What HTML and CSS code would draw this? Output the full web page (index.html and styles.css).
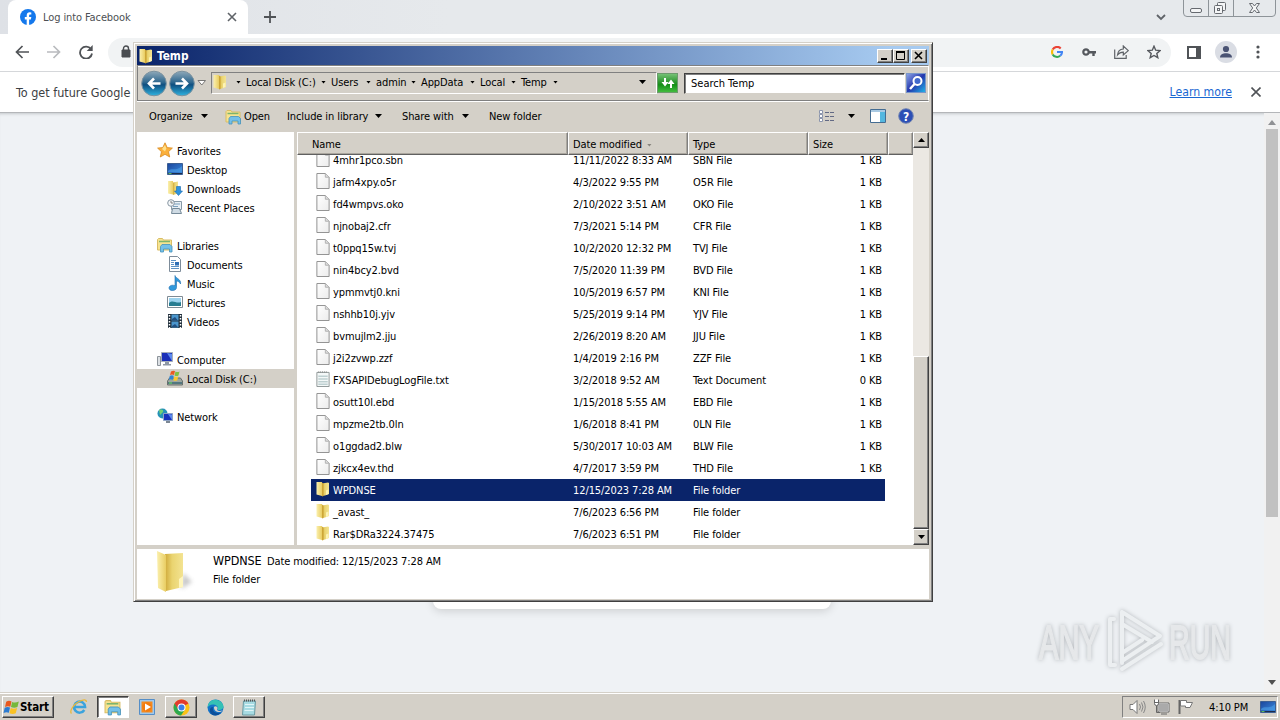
FILE: index.html
```
<!DOCTYPE html>
<html lang="en">
<head>
    <meta charset="UTF-8">
    <meta name="viewport" content="width=device-width, initial-scale=1.0">
    <title>Log into Facebook</title>
    <link rel="stylesheet" href="styles.css">
</head>
<body>
    <!-- shared icons -->
    <svg class="defs" width="0" height="0">
        <defs>
            <linearGradient id="gold" x1="0" x2="1"><stop offset="0" stop-color="#fbf0ae"/><stop offset="1" stop-color="#e9cd62"/></linearGradient>
            <linearGradient id="goldDark" x1="0" x2="1"><stop offset="0" stop-color="#cfa93a"/><stop offset=".4" stop-color="#ead470"/><stop offset="1" stop-color="#f3e392"/></linearGradient>
            <linearGradient id="blue" x1="0" y1="0" x2="1" y2="1"><stop offset="0" stop-color="#1b459c"/><stop offset="1" stop-color="#3c8ee0"/></linearGradient>
            <linearGradient id="orb" x1="0" y1="0" x2="0" y2="1"><stop offset="0" stop-color="#8fa9b9"/><stop offset=".45" stop-color="#2f688f"/><stop offset=".55" stop-color="#0f4f80"/><stop offset="1" stop-color="#2fb3e0"/></linearGradient>
            <linearGradient id="paper" x1="0" y1="0" x2="1" y2="1"><stop offset="0" stop-color="#fff"/><stop offset="1" stop-color="#ececec"/></linearGradient>
        </defs>
        <symbol id="i-folder" viewBox="0 0 16 16">
            <path d="M1.500 1H7v14l-5.500-1.500z" fill="url(#gold)"/>
            <path d="M7 2.500L13 1.500l1 .6V13l-4 1.500L7 15z" fill="url(#goldDark)"/>
            <path d="M7 1.500l1.500 1.200V15L7 15.400z" fill="#cda637"/>
            <path d="M11 9.500l2.500-1V13L11 14z" fill="#fdf3b5"/>
        </symbol>
        <symbol id="i-file" viewBox="0 0 14 17">
            <path d="M.5.500h9l4 4v12H.5z" fill="url(#paper)" stroke="#8c8c8c"/>
            <path d="M9.500.500v4h4" fill="#ddd" stroke="#b0b0b0"/>
        </symbol>
        <symbol id="i-text" viewBox="0 0 14 17">
            <path d="M.5 1.500h13v15H.5z" fill="#f4f8f8" stroke="#8c9494"/>
            <path d="M2 5.500h10M2 8.500h10M2 11.500h10M2 14h10" stroke="#9fb9ba"/>
            <path d="M2 1h10" stroke="#777" stroke-dasharray="1 1"/>
        </symbol>
        <symbol id="i-library" viewBox="0 0 16 16">
            <path d="M.5 2.500l1-1h4l1 1.500h8v10H.5z" fill="#f6e391" stroke="#d9bd66"/>
            <path d="M2 4.500h11" stroke="#7db46c" stroke-width="1.500"/>
            <path d="M3.500 15V9.500l1.500-2h8l2 2V15h-2.500v-3h-6v3z" fill="#74c0e8" stroke="#4492bd" stroke-width=".8"/>
        </symbol>
        <symbol id="i-star" viewBox="0 0 16 16">
            <path d="M8 .8l2.200 4.800 5.200.5-3.900 3.600 1.200 5.300L8 12.300 3.300 15l1.200-5.300L.6 6.100l5.200-.5z" fill="#fbb03b" stroke="#d98a1f" stroke-width=".8"/>
            <path d="M8 3l1.400 3.500-1.400 3-3-2.400z" fill="#ffe08a"/>
        </symbol>
        <symbol id="i-desktop" viewBox="0 0 16 16">
            <path d="M.5 2.500h15v11H.5z" fill="url(#blue)" stroke="#3d5f92"/>
            <path d="M1 10c4-4 8 1 14-5v6H1z" fill="#4da0e8" opacity=".6"/>
            <path d="M1 12.500h14" stroke="#1d2b4a"/>
            <path d="M1.500 12.500h3" stroke="#5cba5c"/>
        </symbol>
        <symbol id="i-download" viewBox="0 0 16 16">
            <path d="M1 1h5v13.500l-5-1z" fill="url(#gold)"/>
            <path d="M6 2.500l5-1v12L6 15z" fill="url(#goldDark)"/>
            <path d="M9.500 6.500h4V11h2l-4 4.500-4-4.500h2z" fill="#2f93de" stroke="#1a68ad" stroke-width=".6"/>
        </symbol>
        <symbol id="i-recent" viewBox="0 0 16 16">
            <path d="M4.500 2.500h10v8h-10z" fill="#e8eff4" stroke="#8799a6"/>
            <path d="M6 5h7M6 7.500h5" stroke="#7aa0bd"/>
            <path d="M5.500 9.500h7l2 5h-10z" fill="#cfdbe4" stroke="#768a99"/>
            <circle cx="4" cy="4" r="3.300" fill="#f4f7f9" stroke="#8997a3"/>
            <path d="M4 2v2h2" stroke="#666" fill="none" stroke-width=".8"/>
        </symbol>
        <symbol id="i-document" viewBox="0 0 16 16">
            <path d="M2.500.500h8l3 3v12h-11z" fill="#fff" stroke="#7d8c9a"/>
            <path d="M4 4.500h5M4 6.500h3M4 8.500h3M4 10.500h8M4 12.500h8" stroke="#5d93c5"/>
            <path d="M8 6h4v3.500H8z" fill="#2f6fb5"/>
        </symbol>
        <symbol id="i-music" viewBox="0 0 16 16">
            <path d="M8 .5c.5 3 6.500 3.500 5.500 8.500-.8-2-2.500-2.800-4-3v6.500c0 4-7.500 4-7.500.5 0-2.500 3.500-3.500 6-2.300z" fill="#3099dc" stroke="#1c6cad" stroke-width=".6"/>
        </symbol>
        <symbol id="i-picture" viewBox="0 0 16 16">
            <path d="M.5 2.500h15v11H.5z" fill="#fff" stroke="#7f8b94"/>
            <path d="M2 4h12v8H2z" fill="#9dd3ee"/>
            <path d="M2 9c4-4 7 1 12-1v4H2z" fill="#287d91"/>
        </symbol>
        <symbol id="i-video" viewBox="0 0 16 16">
            <path d="M1 1h14v14H1z" fill="#22303d"/>
            <path d="M4.500 1.500h7v6h-7zM4.500 8.500h7v6h-7z" fill="#4b96cd"/>
            <path d="M5 6l3-2 3 3.500H5zM5 13l3-2 3 3H5z" fill="#214f80"/>
            <path d="M2.500 2v13M13.500 2v13" stroke="#fff" stroke-width="1.500" stroke-dasharray="1.500 1.500"/>
        </symbol>
        <symbol id="i-computer" viewBox="0 0 16 16">
            <path d="M.5 5.500h3v9h-3z" fill="#dce0e4" stroke="#8d949b"/>
            <path d="M4.500 1.500h11v9h-11z" fill="#1b2fb8" stroke="#a5adb8"/>
            <path d="M10 2l5 1v7z" fill="#5e8bee"/>
            <path d="M8 11h4v2h2v1.500H6V13h2z" fill="#8e98a4"/>
        </symbol>
        <symbol id="i-disk" viewBox="0 0 16 16">
            <path d="M.5 11l2-3h11l2 3v4H.5z" fill="#9da7a0" stroke="#68716d"/>
            <path d="M1 12h14v2H1z" fill="#53777f"/>
            <path d="M2 13h3" stroke="#6bea61"/>
            <path d="M4 1.500q2-1.200 4-.5L7 5Q5 4 3 5z" fill="#ea5b24"/>
            <path d="M8.500 1.500q2 1 4 0l-1 4q-2 1-4 0z" fill="#7fc242"/>
            <path d="M2.800 5.800q2-1 4 0l-1 4q-2-1-4 0z" fill="#3185d2"/>
            <path d="M7.300 6.300q2 1 4 0l-1 4q-2 1-4 0z" fill="#fac92e"/>
        </symbol>
        <symbol id="i-network" viewBox="0 0 16 16">
            <circle cx="5.500" cy="5.500" r="5" fill="#2592b8"/>
            <path d="M2 2c3-1 5 0 4 2L3 7zM6 7l3-2v4z" fill="#72cf75"/>
            <path d="M6.500 5.500h9v7h-9z" fill="#1830bd" stroke="#8da2c4"/>
            <path d="M11 6l4 .5V12z" fill="#5e8bee"/>
            <path d="M9 13h4v2H9z" fill="#7d8894"/>
        </symbol>
        <symbol id="i-flag" viewBox="0 0 16 16">
            <path d="M3 2.500c2-1.200 3.500-1 5-.2L6.900 7.400c-1.500-.8-3-.8-5 .2z" fill="#e9591f"/>
            <path d="M8.600 2.800c2 .9 3.900.7 6.300-.4l-1.300 5.100c-2 1-4 1-6.100.1z" fill="#76b83b"/>
            <path d="M1.600 8.300c2-1.100 3.500-1 5-.2L5.500 13c-1.500-.9-3.200-.8-5 .2z" fill="#2c7bd1"/>
            <path d="M7.300 8.500c2 1 3.800.8 6-.1L12 13.400c-2 1-4 .9-5.900 0z" fill="#fac223"/>
        </symbol>
    </svg>

    <div class="desktop">
        <div class="browser">
            <div class="tabstrip">
                <div class="tab">
                    <svg width="16" height="16" viewBox="0 0 16 16"><circle cx="8" cy="8" r="8" fill="#1478ec"/><path d="M6.700 16v-5.600H4.800V8h1.900V6.500c0-2.100 1.200-3.200 3-3.200l1.600.1v2h-1c-1 0-1.200.5-1.200 1.200V8h2.200l-.4 2.400H9.100V16z" fill="#fff"/></svg>
                    <span class="tab-title">Log into Facebook</span>
                    <svg width="10" height="10" viewBox="0 0 10 10"><path d="M1 1l8 8M9 1L1 9" stroke="#5f6368" stroke-width="1.600"/></svg>
                </div>
                <svg class="new-tab" width="12" height="12" viewBox="0 0 12 12"><path d="M6 0v12M0 6h12" stroke="#505357" stroke-width="1.800"/></svg>
                <svg class="tab-search" width="10" height="7" viewBox="0 0 10 7"><path d="M1 1l4 4 4-4" fill="none" stroke="#5f6368" stroke-width="1.800"/></svg>
                <svg class="caption" width="94" height="17" viewBox="0 0 94 17">
                    <path d="M.5 0v13q0 3.500 3.500 3.500h85q3.500 0 3.500-3.500V0M25.500 0v16M50.500 0v16" fill="none" stroke="#8e9499"/>
                    <g fill="#f4f5f6" stroke="#666a70"><rect x="7.500" y="8.500" width="11" height="4" rx="1.500"/><rect x="34.500" y="2.500" width="8" height="8" rx="1"/><rect x="31.500" y="5.500" width="8" height="8" rx="1"/><rect x="34.500" y="8.500" width="2" height="2"/>
                    <path d="M66.500 3.500h3l2 2.500 2-2.500h3l-3.200 4.500 3.200 4.500h-3l-2-2.500-2 2.500h-3l3.200-4.500z"/></g>
                </svg>
            </div>
            <div class="toolbar">
                <svg width="14" height="14" viewBox="0 0 14 14"><path d="M14 7H1.500M7.500 1l-6 6 6 6" fill="none" stroke="#505357" stroke-width="1.700"/></svg>
                <svg width="14" height="14" viewBox="0 0 14 14"><path d="M0 7h12.500M6.500 1l6 6-6 6" fill="none" stroke="#b9bbbe" stroke-width="1.700"/></svg>
                <svg width="14" height="14" viewBox="0 0 14 14"><path d="M12 4.200A6 6 0 1 0 13 8.500" fill="none" stroke="#505357" stroke-width="1.800"/><path d="M13.700 0v6H7.700z" fill="#505357"/></svg>
                <div class="omnibox">
                    <svg width="10" height="13" viewBox="0 0 10 13"><path d="M1 5h8v7H1z" fill="#4a4d51" stroke="#4a4d51" stroke-linejoin="round"/><path d="M2.500 5V3.500a2.500 2.500 0 0 1 5 0V5" fill="none" stroke="#4a4d51" stroke-width="1.400"/></svg>
                    <div class="omnibox-actions">
                        <svg width="12" height="12" viewBox="0 0 12 12" fill="none" stroke-width="2.100"><path d="M9.700 2.400A5 5 0 0 0 1.700 3.600" stroke="#ea4335"/><path d="M1.700 3.600a5 5 0 0 0 0 4.800" stroke="#fbbc05"/><path d="M1.700 8.400a5 5 0 0 0 7.500 1.400" stroke="#34a853"/><path d="M9.200 9.800A5 5 0 0 0 11 6H6" stroke="#4285f4"/></svg>
                        <svg class="key" width="14" height="8" viewBox="0 0 14 8"><circle cx="4" cy="4" r="2.700" fill="none" stroke="#55585d" stroke-width="2.200"/><path d="M7 3h7v2.400h-1.300V8h-2.400V5.400H7z" fill="#55585d"/></svg>
                        <svg width="15" height="14" viewBox="0 0 15 14" fill="none" stroke="#5f6368" stroke-width="1.200"><path d="M.7 4.500v8.800h11.500V10"/><path d="M3.500 10c.4-4 2.500-5.800 5.800-6V1l5 4.600-5 4.400V7.200C6.800 7.200 5 8 3.500 10z"/></svg>
                        <svg width="14" height="14" viewBox="0 0 14 14"><path d="M7 1.200l1.700 4 4.300.4-3.200 2.900 1 4.200L7 10.500l-3.800 2.200 1-4.200L1 5.600l4.300-.4z" fill="none" stroke="#55585d" stroke-width="1.400"/></svg>
                    </div>
                </div>
                <svg class="side-panel" width="14" height="13" viewBox="0 0 14 13"><path d="M1 1h12v11H1z" fill="none" stroke="#505357" stroke-width="2"/><path d="M9 0h5v13H9z" fill="#505357"/></svg>
                <svg class="avatar" width="22" height="22" viewBox="0 0 22 22"><circle cx="11" cy="11" r="11" fill="#dadde4"/><circle cx="11" cy="8" r="3.100" fill="#4a5373"/><path d="M5 16.500c0-3 3-4.200 6-4.200s6 1.200 6 4.200z" fill="#4a5373"/></svg>
                <svg class="kebab" width="4" height="14" viewBox="0 0 4 14" fill="#505357"><circle cx="2" cy="2" r="1.600"/><circle cx="2" cy="7" r="1.600"/><circle cx="2" cy="12" r="1.600"/></svg>
            </div>
            <div class="infobar">
                <span class="infobar-text">To get future Google</span>
                <a class="infobar-link">Learn more</a>
                <svg width="10" height="10" viewBox="0 0 10 10"><path d="M.5.500l9 9M9.500.500l-9 9" stroke="#505357" stroke-width="1.600"/></svg>
            </div>
            <div class="page">
                <div class="page-content"><div class="login-card"></div></div>
                <div class="page-scroll">
                    <svg width="8" height="5" viewBox="0 0 8 5"><path d="M0 5l4-5 4 5z" fill="#8f9194"/></svg>
                    <div class="page-thumb"></div>
                    <svg width="8" height="5" viewBox="0 0 8 5"><path d="M0 0h8L4 5z" fill="#505050"/></svg>
                </div>
            </div>
        </div>

        <div class="taskbar">
            <div class="start"><svg width="17" height="17"><use href="#i-flag"/></svg>Start</div>
            <div class="task"><svg width="18" height="18" viewBox="0 0 18 18"><path d="M14.300 12a5.500 5.500 0 1 1 .8-3H5" fill="none" stroke="#3ba3dd" stroke-width="2.500"/><path d="M1.500 15.500C-1 13 4 6 9 3.500s7.500-2 7.500.5" fill="none" stroke="#e9b83c" stroke-width="1.300"/></svg></div>
            <div class="task active"><svg width="18" height="17"><use href="#i-library"/></svg></div>
            <div class="task"><svg width="16" height="16" viewBox="0 0 16 16"><path d="M.5.500h15v15H.5z" fill="#9fc9ed" stroke="#558ec7"/><path d="M2.500 2.500h11v11h-11z" fill="#f58a1f"/><circle cx="8" cy="8" r="4.700" fill="#f27c10"/><path d="M6 4.500l6 3.500-6 3.500z" fill="#fff"/></svg></div>
            <div class="task raised"><svg width="17" height="17" viewBox="0 0 17 17"><circle cx="8.500" cy="8.500" r="8" fill="#fbc116"/><path d="M8.500 8.500L1.600 4.500a8 8 0 0 1 13.800 0z" fill="#e33b2e"/><path d="M8.500 8.500L1.600 4.500A8 8 0 0 0 8 16.500l4-6z" fill="#2da94f"/><path d="M1.600 4.500L5 10l3.500-5h7L8 3z" fill="#e33b2e"/><circle cx="8.500" cy="8.500" r="4" fill="#fff"/><circle cx="8.500" cy="8.500" r="3" fill="#3c7fe8"/></svg></div>
            <div class="task"><svg width="17" height="17" viewBox="0 0 17 17"><circle cx="8.500" cy="8.500" r="8" fill="#1473c8"/><path d="M1 6C3-1 14-1 16.500 7c.5 3.500-4 5-6 3.500 1.500-3-1.500-5-4.500-5C3 5.500 1.300 7 .5 9z" fill="#35c1b5"/><path d="M6 8c-1 4 2 7 8 5.500-3 4-10 4-11-1-.5-3 1-4.500 3-4.500z" fill="#0c4f9a"/><path d="M7 8c1-1.500 3.500-.5 3.500 1 0 1-.5 1.300-.3 2 1 1.500 4 1.300 5.800.3-3 3.500-9.500 1.500-9-3.300z" fill="#d4d0c8"/></svg></div>
            <div class="task raised"><svg width="16" height="17" viewBox="0 0 16 17"><path d="M2.500 2h12l-1 14H1.500z" fill="#a7dbe2" stroke="#6b9aa3"/><path d="M4 5.500h9M4 8.500h9M3.500 11.500h9" stroke="#e1f5f7"/><path d="M3 1.500h11" stroke="#555" stroke-width="2" stroke-dasharray="1 1"/></svg></div>
            <div class="tray">
                <svg width="17" height="16" viewBox="0 0 17 16"><path d="M1 5.500h3L8 1.500v13L4 10.500H1z" fill="#fff" stroke="#777"/><path d="M10.500 5q2 3 0 6M12.500 3.500q3 4.500 0 9M14.500 2q3.500 6 0 12" fill="none" stroke="#888"/></svg>
                <svg width="17" height="16" viewBox="0 0 17 16"><path d="M5.500 4.500h10v8h-10z" fill="#aaa" stroke="#fff"/><path d="M5 4h11v9H5zM8 15h6M3.500 7v6.500H7" fill="none" stroke="#666"/><path d="M1.500.500v4q0 2 2 2t2-2v-4M1.500 3.500h4" fill="#fff" stroke="#666"/></svg>
                <svg width="17" height="16" viewBox="0 0 17 16"><path d="M2.500 1v14" stroke="#666" stroke-width="2"/><path d="M3.500 1.500h6v2h6L13 8.500H8.500V7h-5z" fill="#fff" stroke="#777"/></svg>
                <span class="clock">4:10 PM</span>
                <svg width="16" height="16"><use href="#i-desktop"/></svg>
            </div>
        </div>

        <svg class="watermark" width="220" height="74" viewBox="0 0 220 74">
            <g class="mark-text">
                <text x="5" y="54" textLength="60" lengthAdjust="spacingAndGlyphs">ANY</text>
                <text x="135" y="54" textLength="62" lengthAdjust="spacingAndGlyphs">RUN</text>
            </g>
            <g class="mark-shape">
                <path d="M88 7v51M88 7l38 24-38 25M80 14h-4v46h5M88 19l30 18M88 48l20-13M88 64l39-25"/>
            </g>
        </svg>

        <div class="window">
            <div class="titlebar">
                <svg width="16" height="16"><use href="#i-folder"/></svg>
                <span class="title">Temp</span>
                <div class="win-btn"><svg width="12" height="10" viewBox="0 0 12 10"><path d="M2 8h6" stroke="#000" stroke-width="2"/></svg></div>
                <div class="win-btn"><svg width="12" height="10" viewBox="0 0 12 10"><path d="M1.500 1v7.500h8V1" fill="none" stroke="#000"/><path d="M1 1h9" stroke="#000" stroke-width="2"/></svg></div>
                <div class="win-btn close"><svg width="12" height="10" viewBox="0 0 12 10"><path d="M2 1l7 7M9 1L2 8" stroke="#000" stroke-width="1.600"/></svg></div>
            </div>

            <div class="navbar">
                <svg width="26" height="27" viewBox="0 0 26 27"><circle cx="13" cy="13.500" r="12.300" fill="url(#orb)" stroke="#7b929f"/><path d="M19.500 13.500H8M13 8.500l-5 5 5 5" fill="none" stroke="#fff" stroke-width="2.600"/></svg>
                <svg class="forward" width="26" height="27" viewBox="0 0 26 27"><circle cx="13" cy="13.500" r="12.300" fill="url(#orb)" stroke="#7b929f"/><path d="M6.500 13.500H18M13 8.500l5 5-5 5" fill="none" stroke="#fff" stroke-width="2.600"/></svg>
                <svg class="history" width="10" height="6" viewBox="0 0 10 6"><path d="M1 .5h7.500L4.800 5z" fill="#fff" stroke="#777"/></svg>
                <div class="address">
                    <svg width="16" height="16"><use href="#i-folder"/></svg>
                    <i class="arrow first"></i><span class="crumb-disk">Local Disk (C:)</span>
                    <i class="arrow"></i><span class="crumb-users">Users</span>
                    <i class="arrow"></i><span class="crumb-admin">admin</span>
                    <i class="arrow"></i><span class="crumb-appdata">AppData</span>
                    <i class="arrow"></i><span class="crumb-local">Local</span>
                    <i class="arrow"></i><span class="crumb-temp">Temp</span>
                    <i class="arrow"></i>
                    <i class="arrow big"></i>
                </div>
                <div class="refresh"><svg width="16" height="14" viewBox="0 0 16 14"><path d="M5 2v5M11 12V7" stroke="#fff" stroke-width="2"/><path d="M1.500 6h7L5 10.500zM7.500 8h7L11 3.500z" fill="#fff"/></svg></div>
                <div class="search">Search Temp</div>
                <div class="search-btn"><svg width="16" height="16" viewBox="0 0 16 16"><circle cx="9.500" cy="6" r="4" fill="#4169cc" stroke="#fff" stroke-width="2"/><path d="M6.500 9L2 14" stroke="#fff" stroke-width="2.500"/></svg></div>
            </div>

            <div class="commands">
                <span class="cmd organize">Organize</span><i class="arrow big"></i>
                <svg class="open-icon" width="17" height="16"><use href="#i-library"/></svg><span class="cmd open">Open</span>
                <span class="cmd include">Include in library</span><i class="arrow big"></i>
                <span class="cmd share">Share with</span><i class="arrow big"></i>
                <span class="cmd new">New folder</span>
                <svg class="views" width="16" height="13" viewBox="0 0 16 13"><path d="M.5.500h3v3h-3zM.5 4.500h3v3h-3zM.5 8.500h3v3h-3z" fill="#fff" stroke="#8b95ac"/><path d="M6 2.500h9M6 6.500h9M6 10.500h9" stroke="#626984" stroke-dasharray="4 1"/></svg>
                <i class="arrow big"></i>
                <svg class="preview" width="16" height="14" viewBox="0 0 16 14"><path d="M.5.500h15v13H.5z" fill="#fff" stroke="#446c92"/><path d="M1 1h14v2H1z" fill="#a9c9e2"/><path d="M10 3h5v10h-5z" fill="#54b7df"/></svg>
                <svg class="help" width="16" height="16" viewBox="0 0 16 16"><circle cx="8" cy="8" r="7.300" fill="#2c4fb5" stroke="#7486b2"/><text x="8" y="12.500" text-anchor="middle" class="help-mark">?</text></svg>
            </div>

            <div class="body">
                <div class="sidebar">
                    <div class="nav root"><svg width="16" height="16"><use href="#i-star"/></svg><span>Favorites</span></div>
                    <div class="nav"><svg width="16" height="16"><use href="#i-desktop"/></svg><span>Desktop</span></div>
                    <div class="nav"><svg width="16" height="16"><use href="#i-download"/></svg><span>Downloads</span></div>
                    <div class="nav"><svg width="16" height="16"><use href="#i-recent"/></svg><span>Recent Places</span></div>
                    <div class="nav root gap"><svg width="16" height="16"><use href="#i-library"/></svg><span>Libraries</span></div>
                    <div class="nav"><svg width="16" height="16"><use href="#i-document"/></svg><span>Documents</span></div>
                    <div class="nav"><svg width="16" height="16"><use href="#i-music"/></svg><span>Music</span></div>
                    <div class="nav"><svg width="16" height="16"><use href="#i-picture"/></svg><span>Pictures</span></div>
                    <div class="nav"><svg width="16" height="16"><use href="#i-video"/></svg><span>Videos</span></div>
                    <div class="nav root gap"><svg width="16" height="16"><use href="#i-computer"/></svg><span>Computer</span></div>
                    <div class="nav selected"><svg width="16" height="16"><use href="#i-disk"/></svg><span>Local Disk (C:)</span></div>
                    <div class="nav root gap"><svg width="16" height="16"><use href="#i-network"/></svg><span>Network</span></div>
                </div>
                <div class="files">
                    <div class="header">
                        <div class="th name">Name</div>
                        <div class="th">Date modified<i class="arrow sort"></i></div>
                        <div class="th">Type</div>
                        <div class="th size">Size</div>
                        <div class="th rest"></div>
                    </div>
                    <div class="rows" id="rows"></div>
                </div>
                <div class="scroll">
                    <div class="scroll-btn"><svg width="7" height="4" viewBox="0 0 7 4"><path d="M0 4l3.500-4L7 4z"/></svg></div>
                    <div class="scroll-thumb"></div>
                    <div class="scroll-btn"><svg width="7" height="4" viewBox="0 0 7 4"><path d="M0 0h7L3.500 4z"/></svg></div>
                </div>
            </div>

            <div class="details">
                <svg width="42" height="44" viewBox="0 0 42 44"><path class="folder-shadow" d="M26 39l11-7-9-9z"/><path d="M10 4l18-1v34l-17 4z" fill="url(#goldDark)"/><path d="M2 1l9 4v37l-8-4z" fill="url(#gold)"/><path d="M24 29l4-3v11l-4 1z" fill="#fff6bd"/></svg>
                <div class="details-text">
                    <div><span class="details-name">WPDNSE</span><span class="details-label">Date modified:</span>12/15/2023 7:28 AM</div>
                    <div>File folder</div>
                </div>
            </div>
        </div>
    </div>

    <script>
        const files = [
            ['4mhr1pco.sbn', '11/11/2022 8:33 AM', 'SBN File', '1 KB'],
            ['jafm4xpy.o5r', '4/3/2022 9:55 PM', 'O5R File', '1 KB'],
            ['fd4wmpvs.oko', '2/10/2022 3:51 AM', 'OKO File', '1 KB'],
            ['njnobaj2.cfr', '7/3/2021 5:14 PM', 'CFR File', '1 KB'],
            ['t0ppq15w.tvj', '10/2/2020 12:32 PM', 'TVJ File', '1 KB'],
            ['nin4bcy2.bvd', '7/5/2020 11:39 PM', 'BVD File', '1 KB'],
            ['ypmmvtj0.kni', '10/5/2019 6:57 PM', 'KNI File', '1 KB'],
            ['nshhb10j.yjv', '5/25/2019 9:14 PM', 'YJV File', '1 KB'],
            ['bvmujlm2.jju', '2/26/2019 8:20 AM', 'JJU File', '1 KB'],
            ['j2i2zvwp.zzf', '1/4/2019 2:16 PM', 'ZZF File', '1 KB'],
            ['FXSAPIDebugLogFile.txt', '3/2/2018 9:52 AM', 'Text Document', '0 KB'],
            ['osutt10l.ebd', '1/15/2018 5:55 AM', 'EBD File', '1 KB'],
            ['mpzme2tb.0ln', '1/6/2018 8:41 PM', '0LN File', '1 KB'],
            ['o1ggdad2.blw', '5/30/2017 10:03 AM', 'BLW File', '1 KB'],
            ['zjkcx4ev.thd', '4/7/2017 3:59 PM', 'THD File', '1 KB'],
            ['WPDNSE', '12/15/2023 7:28 AM', 'File folder', ''],
            ['_avast_', '7/6/2023 6:56 PM', 'File folder', ''],
            ['Rar$DRa3224.37475', '7/6/2023 6:51 PM', 'File folder', '']
        ];

        function iconFor(type) {
            if (type === 'File folder') return 'folder';
            if (type === 'Text Document') return 'text';
            return 'file';
        }

        document.getElementById('rows').innerHTML = files.map(([name, date, type, size]) => `
            <div class="row${name === 'WPDNSE' ? ' selected' : ''}">
                <svg width="16" height="16"><use href="#i-${iconFor(type)}"/></svg>
                <span>${name}</span><span>${date}</span><span>${type}</span><span class="num">${size}</span>
            </div>`).join('');
    </script>
</body>
</html>
```

FILE: styles.css
```
* {
    box-sizing: border-box;
}

body {
    margin: 0;
    font-family: Tahoma, "DejaVu Sans Condensed", "DejaVu Sans", sans-serif;
    font-stretch: condensed;
    font-size: 11px;
    letter-spacing: -0.1px;
    color: #000;
    overflow: hidden;
}

svg {
    display: block;
    flex: none;
}

.defs {
    position: absolute;
}

.desktop {
    position: relative;
    width: 1280px;
    height: 720px;
    display: flex;
    flex-direction: column;
}

/* browser */
.browser {
    flex: 1;
    display: flex;
    flex-direction: column;
    min-height: 0;
}

.tabstrip {
    height: 34px;
    background: linear-gradient(90deg, #dee1e6, #e6e9ec 35%);
    display: flex;
    align-items: center;
    padding-left: 8px;
}

.tab {
    width: 240px;
    height: 34px;
    background: #fff;
    border-radius: 8px 8px 0 0;
    display: flex;
    align-items: center;
    padding: 0 11px 0 12px;
}

.tab-title {
    flex: 1;
    margin-left: 7px;
    color: #4d5054;
}

.new-tab {
    margin-left: 16px;
}

.tab-search {
    margin-left: auto;
    margin-right: 17px;
}

.caption {
    align-self: flex-start;
    margin-right: 3px;
}

.toolbar {
    height: 38px;
    background: #fff;
    border-bottom: 1px solid #d5d7da;
    display: flex;
    align-items: center;
    gap: 18px;
    padding: 0 20px 0 15px;
}

.toolbar > svg {
    margin-top: -1px;
}

.omnibox {
    width: 1064px;
    height: 29px;
    margin-left: -3px;
    border-radius: 15px;
    background: #f1f3f4;
    display: flex;
    align-items: center;
    padding: 0 10px 2px 13px;
}

.omnibox-actions {
    margin-left: auto;
    display: flex;
    align-items: center;
    gap: 18px;
}

.key {
    margin-left: 1px;
}

.side-panel {
    margin-left: -2px;
}

.avatar {
    margin-left: -4px;
}

.kebab {
    margin-left: 1px;
}

.infobar {
    height: 41px;
    background: #fff;
    border-bottom: 1px solid #b4b6b9;
    display: flex;
    align-items: center;
    padding: 0 19px 0 16px;
    font-size: 12.5px;
    letter-spacing: 0;
    color: #3c4043;
}

.infobar-text {
    flex: 1;
}

.infobar-link {
    margin-right: 19px;
    font-size: 12.2px;
    color: #1967d2;
    text-decoration: underline;
}

.page {
    flex: 1;
    display: flex;
    background: #eff2f5;
    box-shadow: inset 0 3px 3px -2px #c5c8cb;
}

.page-content {
    flex: 1;
}

.login-card {
    width: 398px;
    height: 430px;
    margin: 66px 0 0 433px;
    border-radius: 8px;
    background: #fff;
    box-shadow: 0 2px 10px rgba(0, 0, 0, 0.15);
}

.page-scroll {
    width: 16px;
    background: #f1f1f1;
    display: flex;
    flex-direction: column;
    align-items: center;
    padding: 7px 0 7px;
}

.page-thumb {
    width: 12px;
    height: 388px;
    margin: 4px 0 auto;
    background: #c1c1c1;
}

/* taskbar */
.taskbar {
    height: 28px;
    background: #d4d0c8;
    border-top: 1px solid #d4d0c8;
    box-shadow: inset 0 1px #fff;
    display: flex;
    align-items: center;
    padding: 3px 2px 2px;
}

.start,
.raised {
    border: 1px solid;
    border-color: #fff #404040 #404040 #fff;
    box-shadow: inset -1px -1px #808080;
}

.start {
    width: 52px;
    height: 22px;
    margin-right: 9px;
    display: flex;
    align-items: center;
    font-size: 11.5px;
    font-weight: bold;
}

.task {
    width: 32px;
    height: 22px;
    margin-right: 2px;
    display: flex;
    align-items: center;
    justify-content: center;
}

.task.active {
    background: #fff;
    border: 1px solid;
    border-color: #404040 #fff #fff #404040;
    box-shadow: inset 1px 1px #808080;
}

.tray {
    width: 156px;
    height: 22px;
    margin-left: auto;
    border: 1px solid;
    border-color: #808080 #fff #fff #808080;
    display: flex;
    align-items: center;
    gap: 7px;
    padding-left: 6px;
}

.clock {
    width: 39px;
    margin: 0 5px 0 8px;
    white-space: nowrap;
}

/* video watermark */
.watermark {
    position: absolute;
    left: 1034px;
    top: 605px;
    filter: drop-shadow(0 0 2px #b4b8bc);
}

.mark-text {
    font-family: "Liberation Sans", sans-serif;
    font-size: 48px;
    letter-spacing: 0;
    fill: #e6e8ea;
    stroke: #e6e8ea;
    stroke-width: 1.8;
}

.mark-shape {
    fill: none;
    stroke: #eceff1;
    stroke-width: 4;
    stroke-linejoin: round;
    stroke-linecap: round;
}

/* explorer window */
.window {
    position: absolute;
    left: 133px;
    top: 42px;
    width: 800px;
    height: 560px;
    padding: 2px 3px;
    background: #d4d0c8;
    border: 1px solid;
    border-color: #d4d0c8 #404040 #404040 #d4d0c8;
    box-shadow: inset 1px 1px #fff, inset -1px -1px #808080;
    display: flex;
    flex-direction: column;
}

.titlebar {
    height: 19px;
    margin-top: 1px;
    background: linear-gradient(90deg, #0a246a, #a6caf0 95%);
    display: flex;
    align-items: center;
    padding: 0 2px 0 1px;
    color: #fff;
}

.title {
    flex: 1;
    margin-left: 3px;
    font-size: 11.8px;
    font-weight: bold;
    letter-spacing: 0;
}

.win-btn {
    width: 16px;
    height: 14px;
    background: #d4d0c8;
    border: 1px solid;
    border-color: #fff #404040 #404040 #fff;
    box-shadow: inset -1px -1px #808080;
    padding: 1px;
}

.win-btn.close {
    margin-left: 2px;
}

.navbar {
    height: 36px;
    border: 1px solid;
    border-color: #808080 #fff #808080 #808080;
    box-shadow: inset 0 1px #fff, 0 1px #fff;
    display: flex;
    align-items: center;
    padding-left: 3px;
}

.navbar > * {
    flex: none;
}

.forward {
    margin-left: 2px;
}

.history {
    margin: 0 4px 0 2px;
}

.address {
    width: 446px;
    height: 22px;
    border: 1px solid;
    border-color: #808080 #fff #fff #808080;
    display: flex;
    align-items: center;
    padding-bottom: 2px;
    white-space: nowrap;
}

.address span {
    flex: none;
}

.arrow {
    flex: none;
    width: 5px;
    height: 3px;
    margin: 0 5px 0 4px;
    background: #000;
    clip-path: polygon(0 0, 100% 0, 50% 100%);
}

.arrow.first {
    margin-left: 8px;
}

.arrow.big {
    width: 7px;
    height: 4px;
}

.address .arrow.big {
    margin-left: auto;
    margin-right: 10px;
}

.crumb-disk { width: 71px; }
.crumb-users { width: 31px; }
.crumb-admin { width: 31px; }
.crumb-appdata { width: 45px; }
.crumb-local { width: 27px; }
.crumb-temp { width: 28px; }

.refresh {
    width: 21px;
    height: 20px;
    margin: 0 6px 0 0;
    background: linear-gradient(#74c174, #2c962e 45%, #159017 60%, #42bc3e);
    border: 1px solid #6c9a6c;
    display: flex;
    align-items: center;
    justify-content: center;
}

.search {
    width: 221px;
    height: 21px;
    background: #fff;
    border: 1px solid;
    border-color: #404040 #fff #d4d0c8 #404040;
    box-shadow: inset 1px 1px #808080;
    padding: 0 6px;
    line-height: 20px;
    letter-spacing: 0;
}

.search-btn {
    width: 20px;
    height: 20px;
    margin-left: 1px;
    background: linear-gradient(135deg, #8aa0e5, #2337ad 50%, #20b3e8);
    border: 1px solid #7895c9;
    display: flex;
    align-items: center;
    justify-content: center;
}

.commands {
    height: 31px;
    display: flex;
    align-items: center;
    padding: 0 0 1px 12px;
    white-space: nowrap;
}

.commands .arrow {
    margin: 0;
}

.organize { width: 52px; }
.open-icon { margin: 2px 2px 0 17px; }
.open { width: 43px; }
.include { width: 88px; }
.share { width: 60px; margin-left: 20px; }
.new { margin-left: 20px; }
.views { margin: 0 13px 0 auto; }
.preview { margin-left: 15px; }
.help { margin: 0 15px 0 12px; }

.help-mark {
    font-size: 12px;
    font-weight: bold;
    fill: #fff;
}

.body {
    height: 413px;
    display: flex;
}

.sidebar {
    width: 157px;
    background: #fff;
    padding-top: 9px;
}

.nav {
    height: 19px;
    display: flex;
    align-items: center;
    gap: 4px;
    padding-left: 30px;
}

.nav span {
    padding-top: 1px;
}

.nav svg {
    margin-top: -1px;
}

.nav.root {
    padding-left: 20px;
}

.nav.gap {
    margin-top: 19px;
}

.nav.selected {
    background: #d4d0c8;
}

.files {
    width: 616px;
    margin-left: 3px;
    background: #fff;
    display: flex;
    flex-direction: column;
}

.header {
    height: 23px;
    flex: none;
    display: flex;
}

.th {
    width: 120px;
    background: #d4d0c8;
    border: 1px solid;
    border-color: #fff #808080 #606060 #fff;
    box-shadow: inset -1px -1px #aaa69e;
    padding: 1px 0 0 4px;
    display: flex;
    align-items: center;
}

.th.name {
    width: 271px;
    padding-left: 14px;
}

.th.size {
    width: 80px;
}

.th.rest {
    width: 25px;
}

.arrow.sort {
    background: #87837d;
    margin: 2px 0 0 5px;
}

.rows {
    flex: 1;
    min-height: 0;
    overflow: hidden;
    display: flex;
    flex-direction: column;
    justify-content: flex-end;
}

.row {
    flex: none;
    width: 574px;
    height: 22px;
    margin-left: 14px;
    padding: 0 3px 0 4px;
    display: grid;
    grid-template-columns: 18px 240px 120px 110px 1fr;
    align-items: center;
    white-space: nowrap;
}

.row svg {
    margin-top: -2px;
}

.row.selected {
    background: #0a246a;
    color: #fff;
}

.num {
    text-align: right;
}

.scroll {
    width: 16px;
    background: #ebe8e3;
    display: flex;
    flex-direction: column;
}

.scroll-btn,
.scroll-thumb {
    background: #d4d0c8;
    border: 1px solid;
    border-color: #fff #404040 #404040 #fff;
    box-shadow: inset -1px -1px #808080;
}

.scroll-btn {
    height: 16px;
    display: flex;
    align-items: center;
    justify-content: center;
}

.scroll-thumb {
    height: 173px;
    margin-top: auto;
}

.details {
    height: 50px;
    margin-top: 4px;
    background: #fff;
    display: flex;
    padding: 1px 0 0 18px;
}

.folder-shadow {
    fill: #777;
    opacity: 0.4;
    filter: blur(2px);
}

.details-text {
    margin-left: 16px;
    padding-top: 3px;
    line-height: 18px;
}

.details-name {
    display: inline-block;
    width: 54px;
    font-size: 12.5px;
    line-height: 16px;
}

.details-label {
    display: inline-block;
    width: 75px;
}
```
